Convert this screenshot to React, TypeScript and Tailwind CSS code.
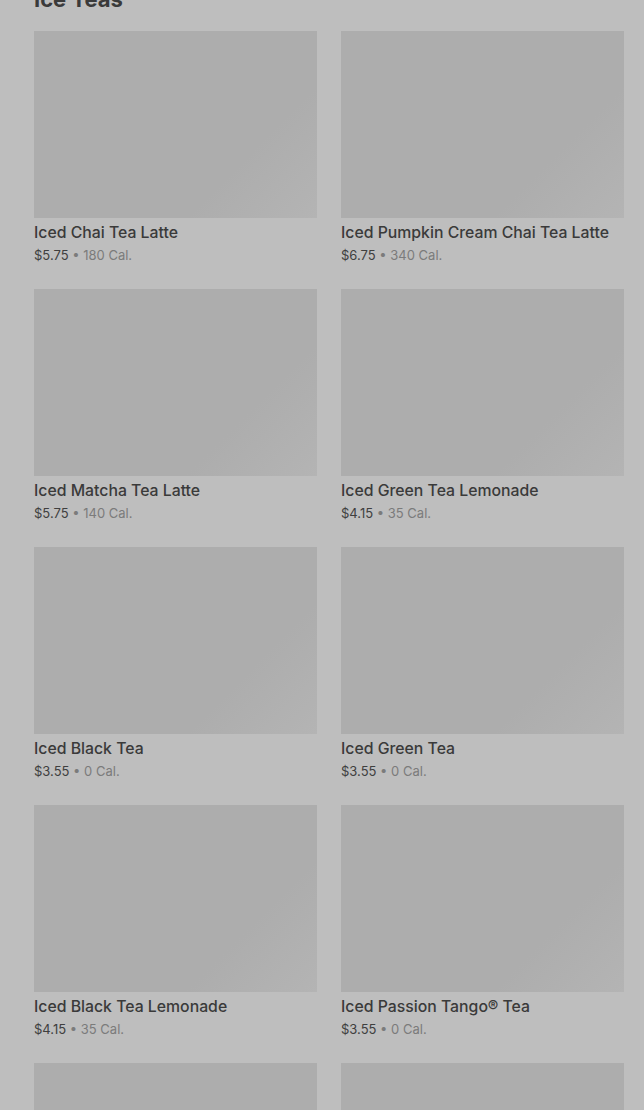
import React from 'react';

type Drink = { name: string; price: string; cal: string };

const drinks: Drink[] = [
  { name: 'Iced Chai Tea Latte', price: '$5.75', cal: '180 Cal.' },
  { name: 'Iced Pumpkin Cream Chai Tea Latte', price: '$6.75', cal: '340 Cal.' },
  { name: 'Iced Matcha Tea Latte', price: '$5.75', cal: '140 Cal.' },
  { name: 'Iced Green Tea Lemonade', price: '$4.15', cal: '35 Cal.' },
  { name: 'Iced Black Tea', price: '$3.55', cal: '0 Cal.' },
  { name: 'Iced Green Tea', price: '$3.55', cal: '0 Cal.' },
  { name: 'Iced Black Tea Lemonade', price: '$4.15', cal: '35 Cal.' },
  { name: 'Iced Passion Tango® Tea', price: '$3.55', cal: '0 Cal.' },
  { name: 'Iced Peach Green Tea', price: '$4.15', cal: '60 Cal.' },
  { name: 'Iced Peach Green Tea Lemonade', price: '$4.65', cal: '90 Cal.' },
];

const DrinkCard: React.FC<{ drink: Drink }> = ({ drink }) => (
  <div className="flex flex-col">
    <div className="h-[187px] bg-[linear-gradient(135deg,#adadad_72%,#b4b4b4_100%)]" />
    <div className="mt-[4px] text-[15.8px] leading-[22px] font-medium text-[#3a3a3a]">
      {drink.name}
    </div>
    <div className="mt-[2px] text-[13px] leading-[18px] text-[#3f3f3f]">
      {drink.price}
      <span className="text-[#7b7b7b]"> • {drink.cal}</span>
    </div>
  </div>
);

export default function App() {
  return (
    <div className="h-[1110px] overflow-hidden bg-[#bebebe] pl-[34px] pr-[20px] font-['Inter','Noto_Sans',sans-serif]">
      <h2 className="-mt-[16px] mb-[17px] text-[22px] leading-[30px] font-bold text-[#3a3a3a]">
        Ice Teas
      </h2>
      <div className="grid grid-cols-2 gap-x-[24px] gap-y-[25px]">
        {drinks.map((d) => (
          <DrinkCard key={d.name} drink={d} />
        ))}
      </div>
    </div>
  );
}
